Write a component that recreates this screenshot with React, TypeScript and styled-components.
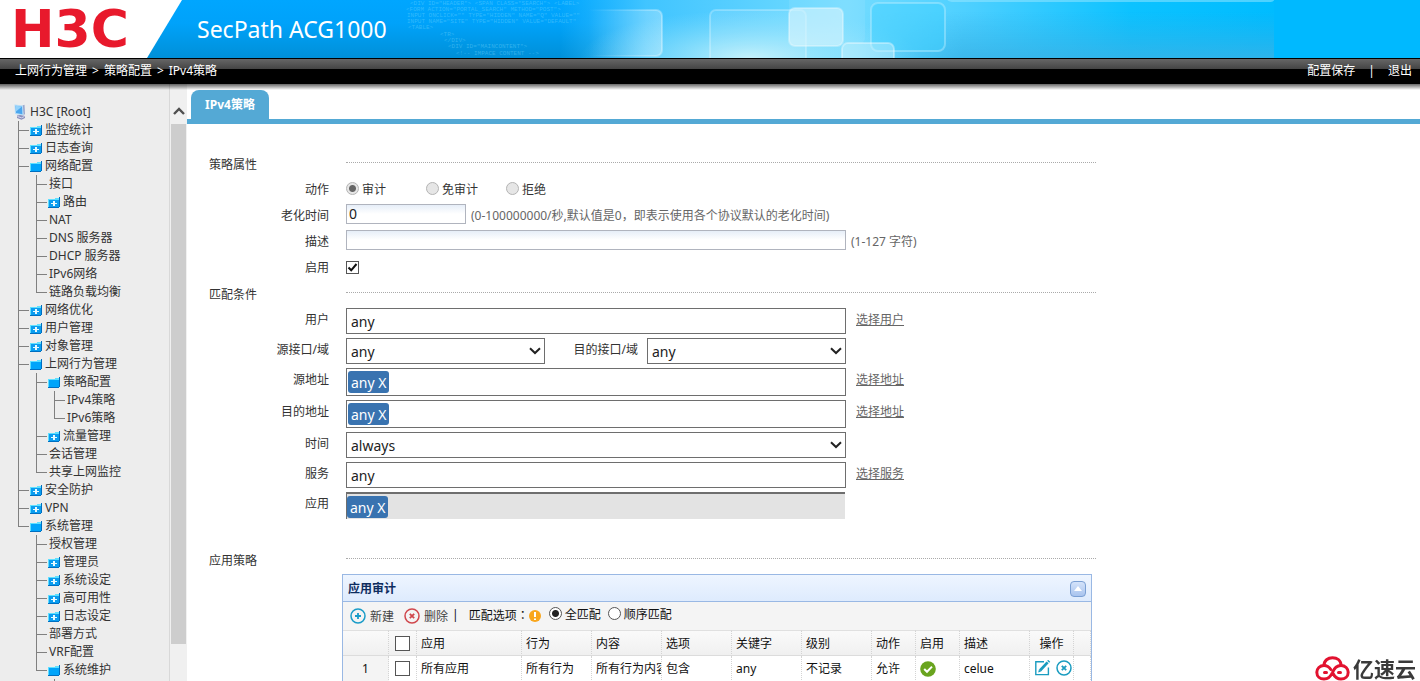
import React from "react";
import styled, { createGlobalStyle, css } from "styled-components";

const FONT = `"Noto Sans", "Noto Sans CJK SC", sans-serif`;

const GlobalStyle = createGlobalStyle`
  *, *::before, *::after { box-sizing: border-box; }
  body { margin: 0; background: #fff; color: #333; font: 12px/18px ${FONT}; }
  input, select, button { font-family: ${FONT}; margin: 0; }
  ul { list-style: none; margin: 0; padding: 0; }
`;

/* ---------- Page frame ---------- */

const Page = styled.div`
  display: flex;
  flex-direction: column;
  height: 100vh;
  overflow: hidden;
`;

const Banner = styled.header`
  position: relative;
  flex: none;
  display: flex;
  align-items: center;
  height: 58px;
  background: #00b9ff;
  overflow: hidden;
`;

const BannerArt = styled.svg`
  position: absolute;
  inset: 0 auto auto 0;
`;

const Logo = styled.div`
  position: relative;
  flex: none;
  width: 183px;
  padding-left: 11px;
  color: #e8192c;
  font: bold 52px/56px "DejaVu Sans", sans-serif;
`;

const Product = styled.h1`
  position: relative;
  margin: 0 0 0 14px;
  color: #fff;
  font-size: 23px;
  line-height: 32px;
  font-weight: 400;
`;

const NavBar = styled.nav`
  position: relative;
  z-index: 1;
  flex: none;
  display: flex;
  justify-content: space-between;
  height: 26px;
  padding: 3px 8px 0 15px;
  border-top: 1px solid #000;
  background: linear-gradient(#666, #444 10px, #000 10px);
  color: #fff;

  &::after {
    content: "";
    position: absolute;
    inset: 100% 0 auto 0;
    height: 6px;
    background: linear-gradient(rgba(0, 0, 0, 0.6), rgba(0, 0, 0, 0));
  }
`;

const NavGroup = styled.div<{ $gap: number }>`
  display: flex;
  gap: ${(p) => p.$gap}px;
`;

const NavLink = styled.a`
  color: #fff;
  text-decoration: none;
`;

const Body = styled.div`
  flex: 1;
  display: flex;
  min-height: 0;
`;

/* ---------- Sidebar ---------- */

const Sidebar = styled.aside`
  flex: none;
  display: flex;
  width: 187px;
  background: #ededed;
  overflow: hidden;
`;

const TreePane = styled.div`
  flex: 1;
  padding: 19px 0 0 14px;
  border-right: 1px solid #d8d8d8;
  overflow: hidden;
`;

const ScrollTrack = styled.div`
  flex: none;
  display: flex;
  flex-direction: column;
  align-items: center;
  width: 17px;
  padding: 22px 1px 0;
  background: #f0f0f0;
`;

const ScrollThumb = styled.div`
  width: 100%;
  height: 520px;
  margin-top: 8px;
  background: #cdcdcd;
`;

const RootNode = styled.div`
  display: flex;
  align-items: center;
  gap: 4px;
  height: 18px;
`;

const TreeList = styled.ul<{ $nested?: boolean }>`
  margin-left: ${(p) => (p.$nested ? 6 : 4)}px;
`;

const TreeItem = styled.li`
  padding-left: 12px;
  background:
    linear-gradient(#808080, #808080) 0 0 / 1px 100% no-repeat,
    linear-gradient(#808080, #808080) 0 9px / 11px 1px no-repeat;

  &:last-child {
    background-size: 1px 10px, 11px 1px;
  }
`;

const TreeLink = styled.a<{ $leaf: boolean }>`
  display: flex;
  align-items: center;
  gap: 3px;
  height: 18px;
  padding-left: ${(p) => (p.$leaf ? 1 : 0)}px;
  color: #333;
  text-decoration: none;
  white-space: nowrap;
`;

/* ---------- Main area ---------- */

const Main = styled.main`
  flex: 1;
  min-width: 0;
  overflow: hidden;
`;

const TabStrip = styled.div`
  display: flex;
  padding: 6px 4px 0;
  border-bottom: 5px solid #54a9d5;
`;

const Tab = styled.button`
  width: 78px;
  height: 29px;
  padding: 0 0 2px;
  border: 0;
  border-radius: 8px 8px 0 0;
  background: #54a9d5;
  color: #fff;
  font-size: 12px;
  font-weight: 700;
`;

const Form = styled.form`
  padding: 27px 22px 0;
`;

const Section = styled.div`
  display: flex;
  height: 26px;
`;

const SectionTitle = styled.h2`
  flex: none;
  width: 137px;
  margin: 0;
  font-size: 12px;
  line-height: 28px;
  font-weight: 400;
`;

const SectionRule = styled.div`
  flex: 0 1 750px;
  height: 12px;
  border-bottom: 1px dotted #aaa;
`;

const Row = styled.div`
  display: flex;
  height: 26px;
`;

const Caption = styled.label`
  flex: none;
  width: 120px;
  margin-right: 17px;
  line-height: 26px;
  text-align: right;
`;

const RadioOption = styled.label`
  display: flex;
  align-items: center;
  gap: 3px;
  width: 80px;
`;

const Radio = styled.input.attrs({ type: "radio" })<{ $muted?: boolean }>`
  appearance: none;
  flex: none;
  width: 13px;
  height: 13px;
  margin-bottom: 4px;
  border: 1px solid ${(p) => (p.$muted ? "#b4b4b4" : "#555")};
  border-radius: 50%;
  background: ${(p) => (p.$muted ? "#e6e6e6" : "#fff")};

  &:checked {
    background: radial-gradient(
      circle,
      ${(p) => (p.$muted ? "#666" : "#222")} 3px,
      ${(p) => (p.$muted ? "#e6e6e6" : "#fff")} 4px
    );
  }
`;

const TextInput = styled.input<{ $short?: boolean }>`
  width: ${(p) => (p.$short ? 120 : 500)}px;
  height: 20px;
  margin-top: 1px;
  padding: 0 2px 2px;
  border: 1px solid #b0b4be;
  background: linear-gradient(#e6eef8, #fff 9px);
  color: #222;
  font-size: 14px;
`;

const Hint = styled.span`
  margin-left: 5px;
  color: #666;
  line-height: 26px;
`;

const CheckWrap = styled.span<{ $size: number }>`
  display: inline-grid;
  width: ${(p) => p.$size}px;
  height: ${(p) => p.$size}px;

  > * {
    grid-area: 1 / 1;
  }

  svg {
    pointer-events: none;
  }
`;

const CheckInput = styled.input.attrs({ type: "checkbox" })`
  appearance: none;
  width: 100%;
  height: 100%;
  border: 1px solid #555;
  background: #fff;
`;

const EnableCell = styled.div`
  padding-top: 6px;
  line-height: 0;
`;

const MatchRows = styled.div`
  display: flex;
  flex-direction: column;
  gap: 4px;
  padding: 1px 0 28px;
`;

const MatchRow = styled.div`
  display: flex;
  align-items: flex-start;
`;

const MatchCaption = styled.label<{ $inline?: boolean }>`
  flex: none;
  width: ${(p) => (p.$inline ? 93 : 120)}px;
  margin-right: ${(p) => (p.$inline ? 9 : 17)}px;
  line-height: 24px;
  text-align: right;
`;

const fieldFrame = css`
  border: 1px solid #6e6e6e;
  background: #fff;
  color: #222;
  font-size: 14px;
`;

const MatchInput = styled.input`
  ${fieldFrame}
  width: 500px;
  height: 26px;
  padding: 0 4px;
`;

const SelectWrap = styled.div<{ $wide?: boolean }>`
  display: grid;
  align-items: center;
  width: ${(p) => (p.$wide ? 500 : 199)}px;

  > * {
    grid-area: 1 / 1;
  }

  svg {
    justify-self: end;
    margin-right: 4px;
    pointer-events: none;
  }
`;

const Select = styled.select`
  ${fieldFrame}
  appearance: none;
  width: 100%;
  height: 26px;
  padding: 0 4px;
`;

const TagField = styled.div`
  ${fieldFrame}
  display: flex;
  align-items: center;
  width: 500px;
  height: 28px;
  padding: 0 1px;
`;

const AppTagField = styled.div`
  display: flex;
  align-items: center;
  width: 499px;
  height: 27px;
  border-top: 2px solid #6e6e6e;
  border-left: 1px solid #6e6e6e;
  background: #e3e3e3;
`;

const Tag = styled.button`
  height: 22px;
  padding: 1px 2px 0 3px;
  border: 0;
  border-radius: 3px;
  background: #3973b0;
  color: #fff;
  font-size: 14px;
  line-height: 21px;
`;

const PickLink = styled.a`
  margin-left: 10px;
  color: #666;
  line-height: 24px;
`;

/* ---------- Audit panel ---------- */

const Panel = styled.section`
  max-width: 750px;
  margin: 1px 0 0 133px;
  border: 1px solid #99b8e4;
  color: #111;
`;

const PanelHeader = styled.div`
  display: flex;
  align-items: center;
  justify-content: space-between;
  height: 27px;
  padding: 1px 5px 0;
  border-bottom: 1px solid #99b8e4;
  background: linear-gradient(#eef5ff, #deebfd);
`;

const PanelTitle = styled.h3`
  margin: 0;
  color: #0e2d5f;
  font-size: 12px;
  font-weight: 700;
`;

const CollapseButton = styled.button`
  display: grid;
  place-items: center;
  width: 16px;
  height: 16px;
  padding: 0;
  border: 1px solid #7ba0d4;
  border-radius: 4px;
  background: linear-gradient(#d4e3fa, #a9c4ee);
`;

const Toolbar = styled.div`
  display: flex;
  height: 28px;
  padding: 0 7px;
  background: #f4f4f4;
`;

const ToolButton = styled.button`
  display: flex;
  align-items: center;
  gap: 4px;
  height: 28px;
  margin-right: 10px;
  padding: 0;
  border: 0;
  background: none;
  color: #444;
  font-size: 12px;

  & + & {
    margin-right: 4px;
  }
`;

const MatchOptions = styled.div`
  display: flex;
  align-items: center;
  height: 26px;
  white-space: nowrap;
`;

const OptionsText = styled.span`
  margin-left: 10px;
`;

const CenteredColon = styled.span`
  font-family: "Noto Sans CJK TC", sans-serif;
`;

const WarnIcon = styled.svg`
  margin: 2px 8px 0 0;
`;

const OptionLabel = styled.label`
  display: flex;
  align-items: center;
  gap: 3px;
  margin-right: 7px;
`;

const Table = styled.table`
  width: 100%;
  table-layout: fixed;
  border-collapse: separate;
  border-spacing: 0;
`;

const HeadCell = styled.th<{ $center?: boolean }>`
  height: 26px;
  padding: 1px 0 0 ${(p) => (p.$center ? 0 : 4)}px;
  border-top: 1px solid #e0e0e0;
  border-right: 1px dotted #d4d4d4;
  border-bottom: 1px solid #dcdcdc;
  background: linear-gradient(#fafafa, #f0f0f0);
  font-weight: 400;
  text-align: ${(p) => (p.$center ? "center" : "left")};
  white-space: nowrap;
`;

const Cell = styled.td<{ $center?: boolean; $head?: boolean }>`
  height: 26px;
  padding: 0 0 0 ${(p) => (p.$center ? 0 : 4)}px;
  border-right: 1px dotted #d4d4d4;
  border-bottom: 1px dotted #d4d4d4;
  background: ${(p) => (p.$head ? "#f4f4f4" : "#fff")};
  text-align: ${(p) => (p.$center ? "center" : "left")};
  white-space: nowrap;
  overflow: hidden;

  > svg {
    vertical-align: middle;
  }
`;

const CheckHolder = styled.div`
  display: grid;
  place-items: center;
`;

const Actions = styled.div`
  display: flex;
  justify-content: flex-end;
  gap: 5px;
  padding: 0 1px 2px 0;
`;

const IconButton = styled.button`
  display: flex;
  padding: 0;
  border: 0;
  background: none;
`;

/* ---------- Corner mark ---------- */

const CornerMark = styled.div`
  position: fixed;
  right: 4px;
  bottom: 0;
  display: flex;
  align-items: center;
  gap: 3px;
  height: 26px;
  color: #3a3a3a;
  font: bold 21px/26px "Noto Sans CJK SC", sans-serif;
`;

/* ---------- Drawings ---------- */

const CODE_LINES: [number, number, string][] = [
  [410, 5, "<DIV ID=\"HEADER\"> <SPAN CLASS=\"SEARCH\"> <LABEL>"],
  [406, 11, "<FORM ACTION=\"PORTAL_SEARCH\" METHOD=\"POST\">"],
  [407, 17, "INPUT ONCLICK=\"\" TYPE=\"HIDDEN\" NAME=\"Q\" VALUE=\"\""],
  [407, 23, "INPUT NAME=\"SITE\" TYPE=\"HIDDEN\" VALUE=\"DEFAULT\""],
  [408, 29, "<TABLE>"],
  [440, 36, "<TR>"],
  [444, 42, "</DIV>"],
  [448, 48, "<DIV ID=\"MAINCONTENT\">"],
  [456, 55, "<!-- IMPACE CONTENT -->"],
];

const Art = () => (
  <BannerArt width="1274" height="58" viewBox="0 0 1274 58" aria-hidden="true">
    <defs>
      <linearGradient id="deep" x1="0" y1="0" x2="0" y2="1">
        <stop offset="0" stopColor="#00a6ff" />
        <stop offset="0.4" stopColor="#00a2fa" />
        <stop offset="1" stopColor="#0090d8" />
      </linearGradient>
      <linearGradient id="light" x1="0" y1="0" x2="1" y2="0">
        <stop offset="0" stopColor="#3fc4ff" stopOpacity="0" />
        <stop offset="0.12" stopColor="#48c8ff" stopOpacity="0.9" />
        <stop offset="0.4" stopColor="#74dcff" />
        <stop offset="0.58" stopColor="#4bcfff" />
        <stop offset="0.8" stopColor="#0cc2ff" />
        <stop offset="1" stopColor="#00bcff" />
      </linearGradient>
      <linearGradient id="shade" x1="0" y1="0" x2="0" y2="1">
        <stop offset="0.2" stopColor="#2fb0e8" stopOpacity="0" />
        <stop offset="1" stopColor="#38b2e6" stopOpacity="0.8" />
      </linearGradient>
      <linearGradient id="shadeFade" x1="0" y1="0" x2="1" y2="0">
        <stop offset="0" stopColor="#000" />
        <stop offset="0.25" stopColor="#fff" />
        <stop offset="1" stopColor="#fff" />
      </linearGradient>
      <mask id="shadeMask">
        <rect x="860" width="414" height="58" fill="url(#shadeFade)" />
      </mask>
      <linearGradient id="edge" x1="0" y1="0" x2="1" y2="0">
        <stop offset="0.2" stopColor="#fff" stopOpacity="0" />
        <stop offset="1" stopColor="#fff" stopOpacity="0.3" />
      </linearGradient>
      <radialGradient id="glow">
        <stop offset="0" stopColor="#c9f4fb" stopOpacity="0.9" />
        <stop offset="1" stopColor="#8fe2fb" stopOpacity="0" />
      </radialGradient>
    </defs>
    <rect width="760" height="58" fill="url(#deep)" />
    <rect x="560" width="714" height="58" fill="url(#light)" />
    <rect x="860" width="414" height="58" fill="url(#shade)" mask="url(#shadeMask)" />
    <ellipse cx="750" cy="58" rx="170" ry="48" fill="url(#glow)" />
    <rect x="570" y="10" width="92" height="46" rx="6" fill="url(#edge)" stroke="url(#edge)" strokeWidth="2" />
    <rect x="710" y="10" width="96" height="54" rx="6" fill="#fff" fillOpacity="0.1" stroke="#fff" strokeOpacity="0.25" strokeWidth="2" />
    <rect x="789" y="-30" width="76" height="74" rx="6" fill="#fff" fillOpacity="0.08" />
    <rect x="789" y="8" width="54" height="38" rx="6" fill="#d9f5fd" fillOpacity="0.6" stroke="#fff" strokeOpacity="0.3" strokeWidth="2" />
    <rect x="871" y="3" width="74" height="48" rx="7" fill="#3fd0ff" fillOpacity="0.45" stroke="#b9eeff" strokeOpacity="0.45" strokeWidth="2" />
    <rect x="842" y="43" width="52" height="30" rx="6" fill="#e4f8fd" fillOpacity="0.35" stroke="#fff" strokeOpacity="0.35" strokeWidth="2" />
    <rect x="946" y="-20" width="330" height="22" rx="6" fill="#9ce8ff" fillOpacity="0.5" />
    <g fill="#7fdcff" fillOpacity="0.4" fontFamily="Liberation Mono, monospace" fontSize="6">
      {CODE_LINES.map(([x, y, line]) => (
        <text key={y} x={x} y={y}>{line}</text>
      ))}
    </g>
    <path d="M0 0H182L147 58H0Z" fill="#fff" />
  </BannerArt>
);

const ComputerIcon = () => (
  <svg width="12" height="16" viewBox="0 0 12 16" aria-hidden="true">
    <path d="M8.500 1.500 10.500 0.800 11 10 9.500 11.500Z" fill="#9aa6cc" />
    <path d="M0.500 0.500 9 1.500 9.500 11.500 1 10Z" fill="#b5dcf8" />
    <path d="M1.500 1.700 8 2.500 8.400 10.200 2 9Z" fill="#4aa6ee" />
    <path d="M1.500 1.700 8 2.500 2 7.500Z" fill="#93d2fb" />
    <path d="M3 11.500 6 11 11 12V14L7.500 15.800 3 14Z" fill="#8a8fbc" />
    <path d="M3.500 12.500 7.500 13.800 10.500 12.500" stroke="#d5d9ee" fill="none" />
  </svg>
);

const FolderIcon = ({ plus }: { plus: boolean }) => (
  <svg width="12" height="12" viewBox="0 -1 12 12" shapeRendering="crispEdges" aria-hidden="true">
    <path d="M0 2H7V1H11V0H12V10H11V11H0Z" fill="#006fc0" />
    <path d="M0 2H7V1H11V10H0Z" fill="#5fe0ff" />
    <path d="M1 3H11V10H1Z" fill={plus ? "#0a9df0" : "#00a4fa"} />
    {plus && <path d="M3 6H9V7H3ZM5 4H7V9H5Z" fill="#e8faff" />}
  </svg>
);

const Chevron = () => (
  <svg width="12" height="8" viewBox="0 0 12 8" aria-hidden="true">
    <path d="M1 1.2 6 6 11 1.2" fill="none" stroke="#222" strokeWidth="2" />
  </svg>
);

const ScrollUp = () => (
  <svg width="12" height="10" viewBox="0 0 12 10" aria-hidden="true">
    <path d="M1 8 6 3 11 8" fill="none" stroke="#505050" strokeWidth="2.4" />
  </svg>
);

const RoundIcon = ({ color, kind }: { color: string; kind: "plus" | "cross" }) => (
  <svg width="16" height="16" viewBox="0 0 16 16" fill="none" stroke={color} aria-hidden="true">
    <circle cx="8" cy="8" r="7" strokeWidth="1.5" />
    <path d={kind === "plus" ? "M8 5V11M5 8H11" : "M5.8 5.8 10.2 10.2M10.2 5.8 5.8 10.2"} strokeWidth="1.8" />
  </svg>
);

const EditIcon = () => (
  <svg width="17" height="16" viewBox="0 0 17 16" fill="none" stroke="#1a9cc0" aria-hidden="true">
    <path d="M10 1.8H1.8V14.6H14.4V7.5" strokeWidth="1.4" />
    <path d="M6 10.5 13.6 2.4" strokeWidth="2.8" />
    <path d="M14.2 1.8 15.2 0.8" strokeWidth="2.8" />
    <path d="M4.2 12.4 4.9 9.5 7 11.5Z" fill="#1a9cc0" stroke="none" />
  </svg>
);

const OkIcon = () => (
  <svg width="16" height="16" viewBox="0 0 16 16" aria-hidden="true">
    <circle cx="8" cy="8" r="7.8" fill="#69a41e" />
    <path d="M4.2 8 7 10.8 12 5.6" fill="none" stroke="#fff" strokeWidth="2" />
  </svg>
);

const CloudIcon = () => (
  <svg width="35" height="25" viewBox="0 0 35 25" fill="none" stroke="#e2122f" strokeWidth="3" strokeLinecap="round" aria-hidden="true">
    <path d="M9 9.500C9 4.500 13 1.800 17.500 1.800S26 4.500 26 9.500" />
    <path d="M9.500 16.500H11.500M9 9.500C4.800 9.500 1.800 12.500 1.800 16.300C1.800 20.200 4.800 23 9 23C14 23 16 20 17.500 16.500C19 12.500 21.500 9.500 26 9.500C30.200 9.500 33.200 12.500 33.200 16.300C33.200 20.200 30.200 23 26 23C21.500 23 19.500 20.500 18 17.500M9 9.500C12.500 9.500 14.500 11.500 15.800 13.500M23.500 16.500H25.500" />
  </svg>
);

/* ---------- Tree ---------- */

type Node = { label: string; folder?: boolean; children?: Node[] };

const TREE: Node[] = [
  { label: "监控统计", folder: true },
  { label: "日志查询", folder: true },
  {
    label: "网络配置",
    children: [
      { label: "接口" },
      { label: "路由", folder: true },
      { label: "NAT" },
      { label: "DNS 服务器" },
      { label: "DHCP 服务器" },
      { label: "IPv6网络" },
      { label: "链路负载均衡" },
    ],
  },
  { label: "网络优化", folder: true },
  { label: "用户管理", folder: true },
  { label: "对象管理", folder: true },
  {
    label: "上网行为管理",
    children: [
      { label: "策略配置", children: [{ label: "IPv4策略" }, { label: "IPv6策略" }] },
      { label: "流量管理", folder: true },
      { label: "会话管理" },
      { label: "共享上网监控" },
    ],
  },
  { label: "安全防护", folder: true },
  { label: "VPN", folder: true },
  {
    label: "系统管理",
    children: [
      { label: "授权管理" },
      { label: "管理员", folder: true },
      { label: "系统设定", folder: true },
      { label: "高可用性", folder: true },
      { label: "日志设定", folder: true },
      { label: "部署方式" },
      { label: "VRF配置" },
      { label: "系统维护", children: [{ label: "" }] },
    ],
  },
];

const Branch = ({ nodes, nested }: { nodes: Node[]; nested?: boolean }) => (
  <TreeList $nested={nested}>
    {nodes.map((node) => {
      const isFolder = Boolean(node.folder || node.children);
      return (
        <TreeItem key={node.label}>
          <TreeLink href="#" $leaf={!isFolder}>
            {isFolder && <FolderIcon plus={!node.children} />}
            {node.label}
          </TreeLink>
          {node.children && <Branch nodes={node.children} nested />}
        </TreeItem>
      );
    })}
  </TreeList>
);

const Check = ({ size, checked, ...rest }: { size: number; checked?: boolean; id?: string; "aria-label"?: string }) => (
  <CheckWrap $size={size}>
    <CheckInput defaultChecked={checked} {...rest} />
    {checked && (
      <svg width={size} height={size} viewBox="0 0 13 13" aria-hidden="true">
        <path d="M2.500 6.500 5.200 9.300 10.500 3" fill="none" stroke="#111" strokeWidth="2" />
      </svg>
    )}
  </CheckWrap>
);

const Picker = ({ id, value, wide }: { id: string; value: string; wide?: boolean }) => (
  <SelectWrap $wide={wide}>
    <Select id={id} defaultValue={value}>
      <option>{value}</option>
    </Select>
    <Chevron />
  </SelectWrap>
);

const COLUMN_WIDTHS = [46, 28, 105, 70, 70, 70, 70, 70, 44, 44, 70, 44];

export default function App() {
  return (
    <Page>
      <GlobalStyle />
      <Banner>
        <Art />
        <Logo>H3C</Logo>
        <Product>SecPath ACG1000</Product>
      </Banner>
      <NavBar>
        <NavGroup $gap={5}>
          <span>上网行为管理</span>
          <span>&gt;</span>
          <span>策略配置</span>
          <span>&gt;</span>
          <span>IPv4策略</span>
        </NavGroup>
        <NavGroup $gap={13}>
          <NavLink href="#">配置保存</NavLink>
          <span>|</span>
          <NavLink href="#">退出</NavLink>
        </NavGroup>
      </NavBar>
      <Body>
        <Sidebar>
          <TreePane>
            <RootNode>
              <ComputerIcon />
              H3C [Root]
            </RootNode>
            <Branch nodes={TREE} />
          </TreePane>
          <ScrollTrack>
            <ScrollUp />
            <ScrollThumb />
          </ScrollTrack>
        </Sidebar>
        <Main>
          <TabStrip>
            <Tab>IPv4策略</Tab>
          </TabStrip>
          <Form>
            <Section>
              <SectionTitle>策略属性</SectionTitle>
              <SectionRule />
            </Section>
            <Row>
              <Caption as="span">动作</Caption>
              <RadioOption><Radio name="action" defaultChecked $muted />审计</RadioOption>
              <RadioOption><Radio name="action" $muted />免审计</RadioOption>
              <RadioOption><Radio name="action" $muted />拒绝</RadioOption>
            </Row>
            <Row>
              <Caption htmlFor="aging">老化时间</Caption>
              <TextInput id="aging" $short defaultValue="0" />
              <Hint>(0-100000000/秒,默认值是0，即表示使用各个协议默认的老化时间)</Hint>
            </Row>
            <Row>
              <Caption htmlFor="desc">描述</Caption>
              <TextInput id="desc" />
              <Hint>(1-127 字符)</Hint>
            </Row>
            <Row>
              <Caption htmlFor="enable">启用</Caption>
              <EnableCell><Check id="enable" size={13} checked /></EnableCell>
            </Row>
            <Section>
              <SectionTitle>匹配条件</SectionTitle>
              <SectionRule />
            </Section>
            <MatchRows>
              <MatchRow>
                <MatchCaption htmlFor="user">用户</MatchCaption>
                <MatchInput id="user" defaultValue="any" />
                <PickLink href="#">选择用户</PickLink>
              </MatchRow>
              <MatchRow>
                <MatchCaption htmlFor="src-if">源接口/域</MatchCaption>
                <Picker id="src-if" value="any" />
                <MatchCaption htmlFor="dst-if" $inline>目的接口/域</MatchCaption>
                <Picker id="dst-if" value="any" />
              </MatchRow>
              <MatchRow>
                <MatchCaption as="span">源地址</MatchCaption>
                <TagField><Tag type="button">any X</Tag></TagField>
                <PickLink href="#">选择地址</PickLink>
              </MatchRow>
              <MatchRow>
                <MatchCaption as="span">目的地址</MatchCaption>
                <TagField><Tag type="button">any X</Tag></TagField>
                <PickLink href="#">选择地址</PickLink>
              </MatchRow>
              <MatchRow>
                <MatchCaption htmlFor="time">时间</MatchCaption>
                <Picker id="time" value="always" wide />
              </MatchRow>
              <MatchRow>
                <MatchCaption htmlFor="service">服务</MatchCaption>
                <MatchInput id="service" defaultValue="any" />
                <PickLink href="#">选择服务</PickLink>
              </MatchRow>
              <MatchRow>
                <MatchCaption as="span">应用</MatchCaption>
                <AppTagField><Tag type="button">any X</Tag></AppTagField>
              </MatchRow>
            </MatchRows>
            <Section>
              <SectionTitle>应用策略</SectionTitle>
              <SectionRule />
            </Section>
            <Panel>
              <PanelHeader>
                <PanelTitle>应用审计</PanelTitle>
                <CollapseButton type="button" aria-label="收起">
                  <svg width="8" height="5" viewBox="0 0 8 5" aria-hidden="true">
                    <path d="M0 5 4 0 8 5Z" fill="#fff" />
                  </svg>
                </CollapseButton>
              </PanelHeader>
              <Toolbar>
                <ToolButton type="button"><RoundIcon kind="plus" color="#1a9cc8" />新建</ToolButton>
                <ToolButton type="button"><RoundIcon kind="cross" color="#d0474c" />删除</ToolButton>
                <MatchOptions>
                  <span>|</span>
                  <OptionsText>匹配选项<CenteredColon>：</CenteredColon></OptionsText>
                  <WarnIcon width="12" height="12" viewBox="0 0 12 12" aria-hidden="true">
                    <circle cx="6" cy="6" r="6" fill="#f9a61c" />
                    <path d="M6 2V7M6 8.500V10" stroke="#fff" strokeWidth="2" />
                  </WarnIcon>
                  <OptionLabel><Radio name="match" defaultChecked />全匹配</OptionLabel>
                  <OptionLabel><Radio name="match" />顺序匹配</OptionLabel>
                </MatchOptions>
              </Toolbar>
              <Table>
                <colgroup>
                  {COLUMN_WIDTHS.map((width, i) => <col key={i} width={width} />)}
                  <col />
                </colgroup>
                <thead>
                  <tr>
                    <HeadCell />
                    <HeadCell $center><CheckHolder><Check size={15} aria-label="全选" /></CheckHolder></HeadCell>
                    {["应用", "行为", "内容", "选项", "关键字", "级别", "动作", "启用", "描述"].map((name) => (
                      <HeadCell key={name}>{name}</HeadCell>
                    ))}
                    <HeadCell $center>操作</HeadCell>
                    <HeadCell />
                  </tr>
                </thead>
                <tbody>
                  <tr>
                    <Cell $center $head>1</Cell>
                    <Cell $center><CheckHolder><Check size={15} aria-label="选择第1行" /></CheckHolder></Cell>
                    <Cell>所有应用</Cell>
                    <Cell>所有行为</Cell>
                    <Cell>所有行为内容</Cell>
                    <Cell>包含</Cell>
                    <Cell>any</Cell>
                    <Cell>不记录</Cell>
                    <Cell>允许</Cell>
                    <Cell><OkIcon /></Cell>
                    <Cell>celue</Cell>
                    <Cell $center>
                      <Actions>
                        <IconButton type="button" aria-label="编辑"><EditIcon /></IconButton>
                        <IconButton type="button" aria-label="删除"><RoundIcon kind="cross" color="#1a9cc0" /></IconButton>
                      </Actions>
                    </Cell>
                    <Cell />
                  </tr>
                </tbody>
              </Table>
            </Panel>
          </Form>
        </Main>
      </Body>
      <CornerMark>
        <CloudIcon />
        亿速云
      </CornerMark>
    </Page>
  );
}
